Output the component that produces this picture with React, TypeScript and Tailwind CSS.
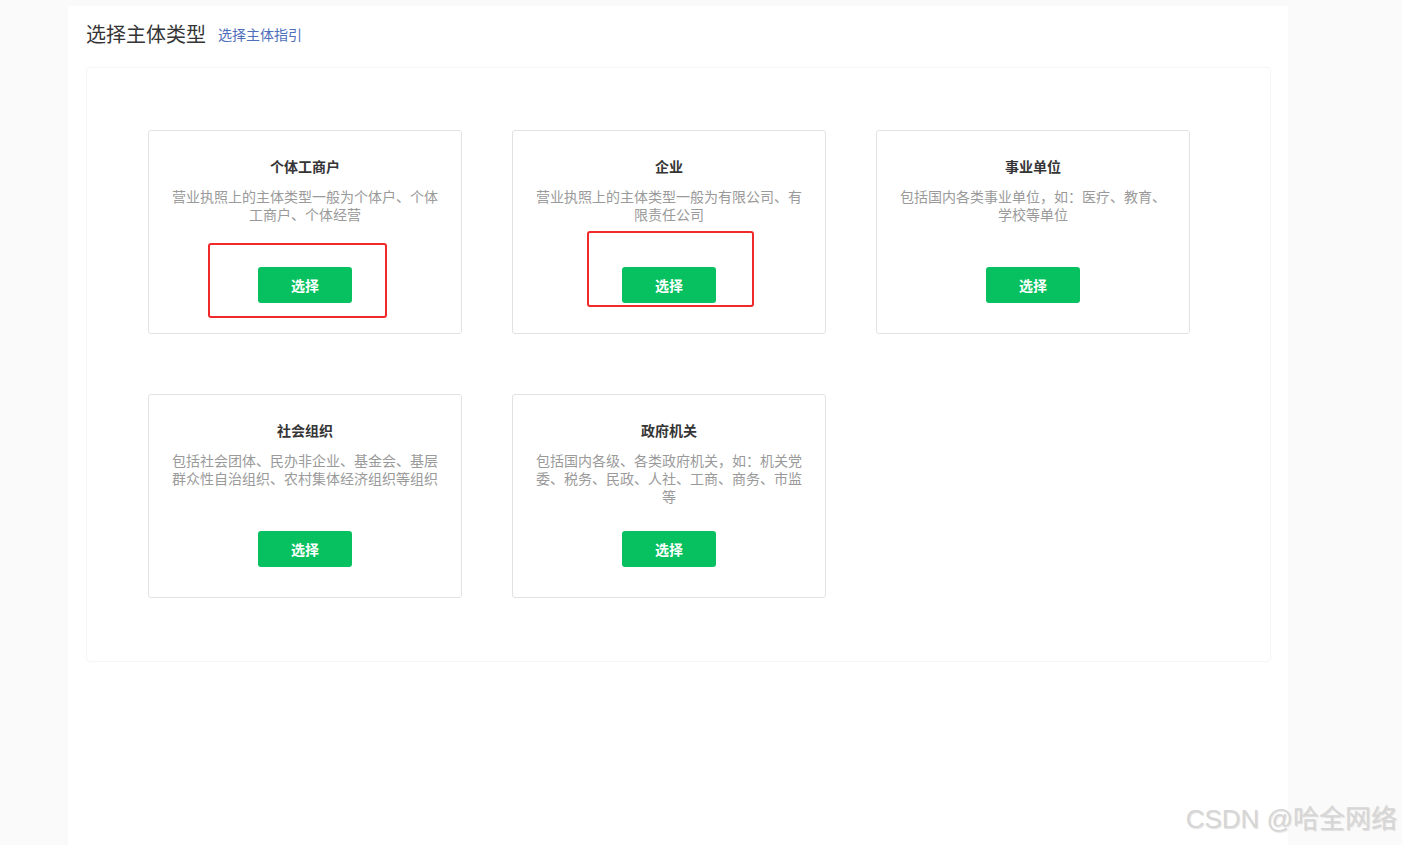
const cards = [
  { title: '个体工商户', desc: '营业执照上的主体类型一般为个体户、个体工商户、个体经营' },
  { title: '企业', desc: '营业执照上的主体类型一般为有限公司、有限责任公司' },
  { title: '事业单位', desc: '包括国内各类事业单位，如：医疗、教育、学校等单位' },
  { title: '社会组织', desc: '包括社会团体、民办非企业、基金会、基层群众性自治组织、农村集体经济组织等组织' },
  { title: '政府机关', desc: '包括国内各级、各类政府机关，如：机关党委、税务、民政、人社、工商、商务、市监等' },
];

const font = { fontFamily: '"Microsoft YaHei", "Noto Sans CJK SC", "Noto Sans", sans-serif' };

const TypeCard = ({ title, desc, mark }: { title: string; desc: string; mark?: 'a' | 'b' }) => (
  <div className="relative flex flex-col items-center rounded-[3px] border border-[#e2e2e2] bg-white px-[22px] pt-[25px] pb-[30px]">
    <h3 className="h-5 text-[14px] leading-5 font-bold text-[#353535]">{title}</h3>
    <p className="mt-[11px] h-[72px] text-center text-[14px] leading-[18px] text-[#9a9a9a]">{desc}</p>
    <button className="mt-[8px] h-9 w-[94px] rounded-[3px] bg-[#07c160] text-[14px] font-bold text-white">
      选择
    </button>
    {mark === 'a' && (
      <div className="pointer-events-none absolute top-[112px] left-[59px] h-[75px] w-[179px] rounded-[3px] border-[2px] border-[#f0292b]" />
    )}
    {mark === 'b' && (
      <div className="pointer-events-none absolute top-[100px] left-[74px] h-[76px] w-[167px] rounded-[3px] border-[2px] border-[#f0292b]" />
    )}
  </div>
);

export default function App() {
  return (
    <div className="relative h-screen overflow-hidden bg-[#fafafa] pt-[6px] pl-[68px]" style={font}>
      <div className="h-full w-[1220px] bg-white px-[18px] pt-[14px]">
        <div className="mb-[19px] flex items-center gap-3">
          <h1 className="text-[20px] leading-7 text-[#353535]">选择主体类型</h1>
          <a className="mt-[1px] text-[14px] text-[#4f6fba]" href="#">选择主体指引</a>
        </div>
        <div className="w-[1185px] rounded-[4px] border border-[#f6f6f6] px-[61px] pt-[62px] pb-[63px] shadow-[0_0_3px_rgba(0,0,0,0.02)]">
          <div className="grid grid-cols-[repeat(3,314px)] gap-x-[50px] gap-y-[60px]">
            {cards.map((c, i) => (
              <TypeCard key={c.title} title={c.title} desc={c.desc} mark={i === 0 ? 'a' : i === 1 ? 'b' : undefined} />
            ))}
          </div>
        </div>
      </div>
      <div
        className="absolute right-[5px] bottom-[10px] text-[26px] leading-8 text-[#d6d6d6] [text-shadow:1px_1px_1px_rgba(0,0,0,0.12)]"
        style={{ fontFamily: '"Liberation Sans", "Noto Sans CJK SC", sans-serif' }}
      >
        CSDN @哈全网络
      </div>
    </div>
  );
}
